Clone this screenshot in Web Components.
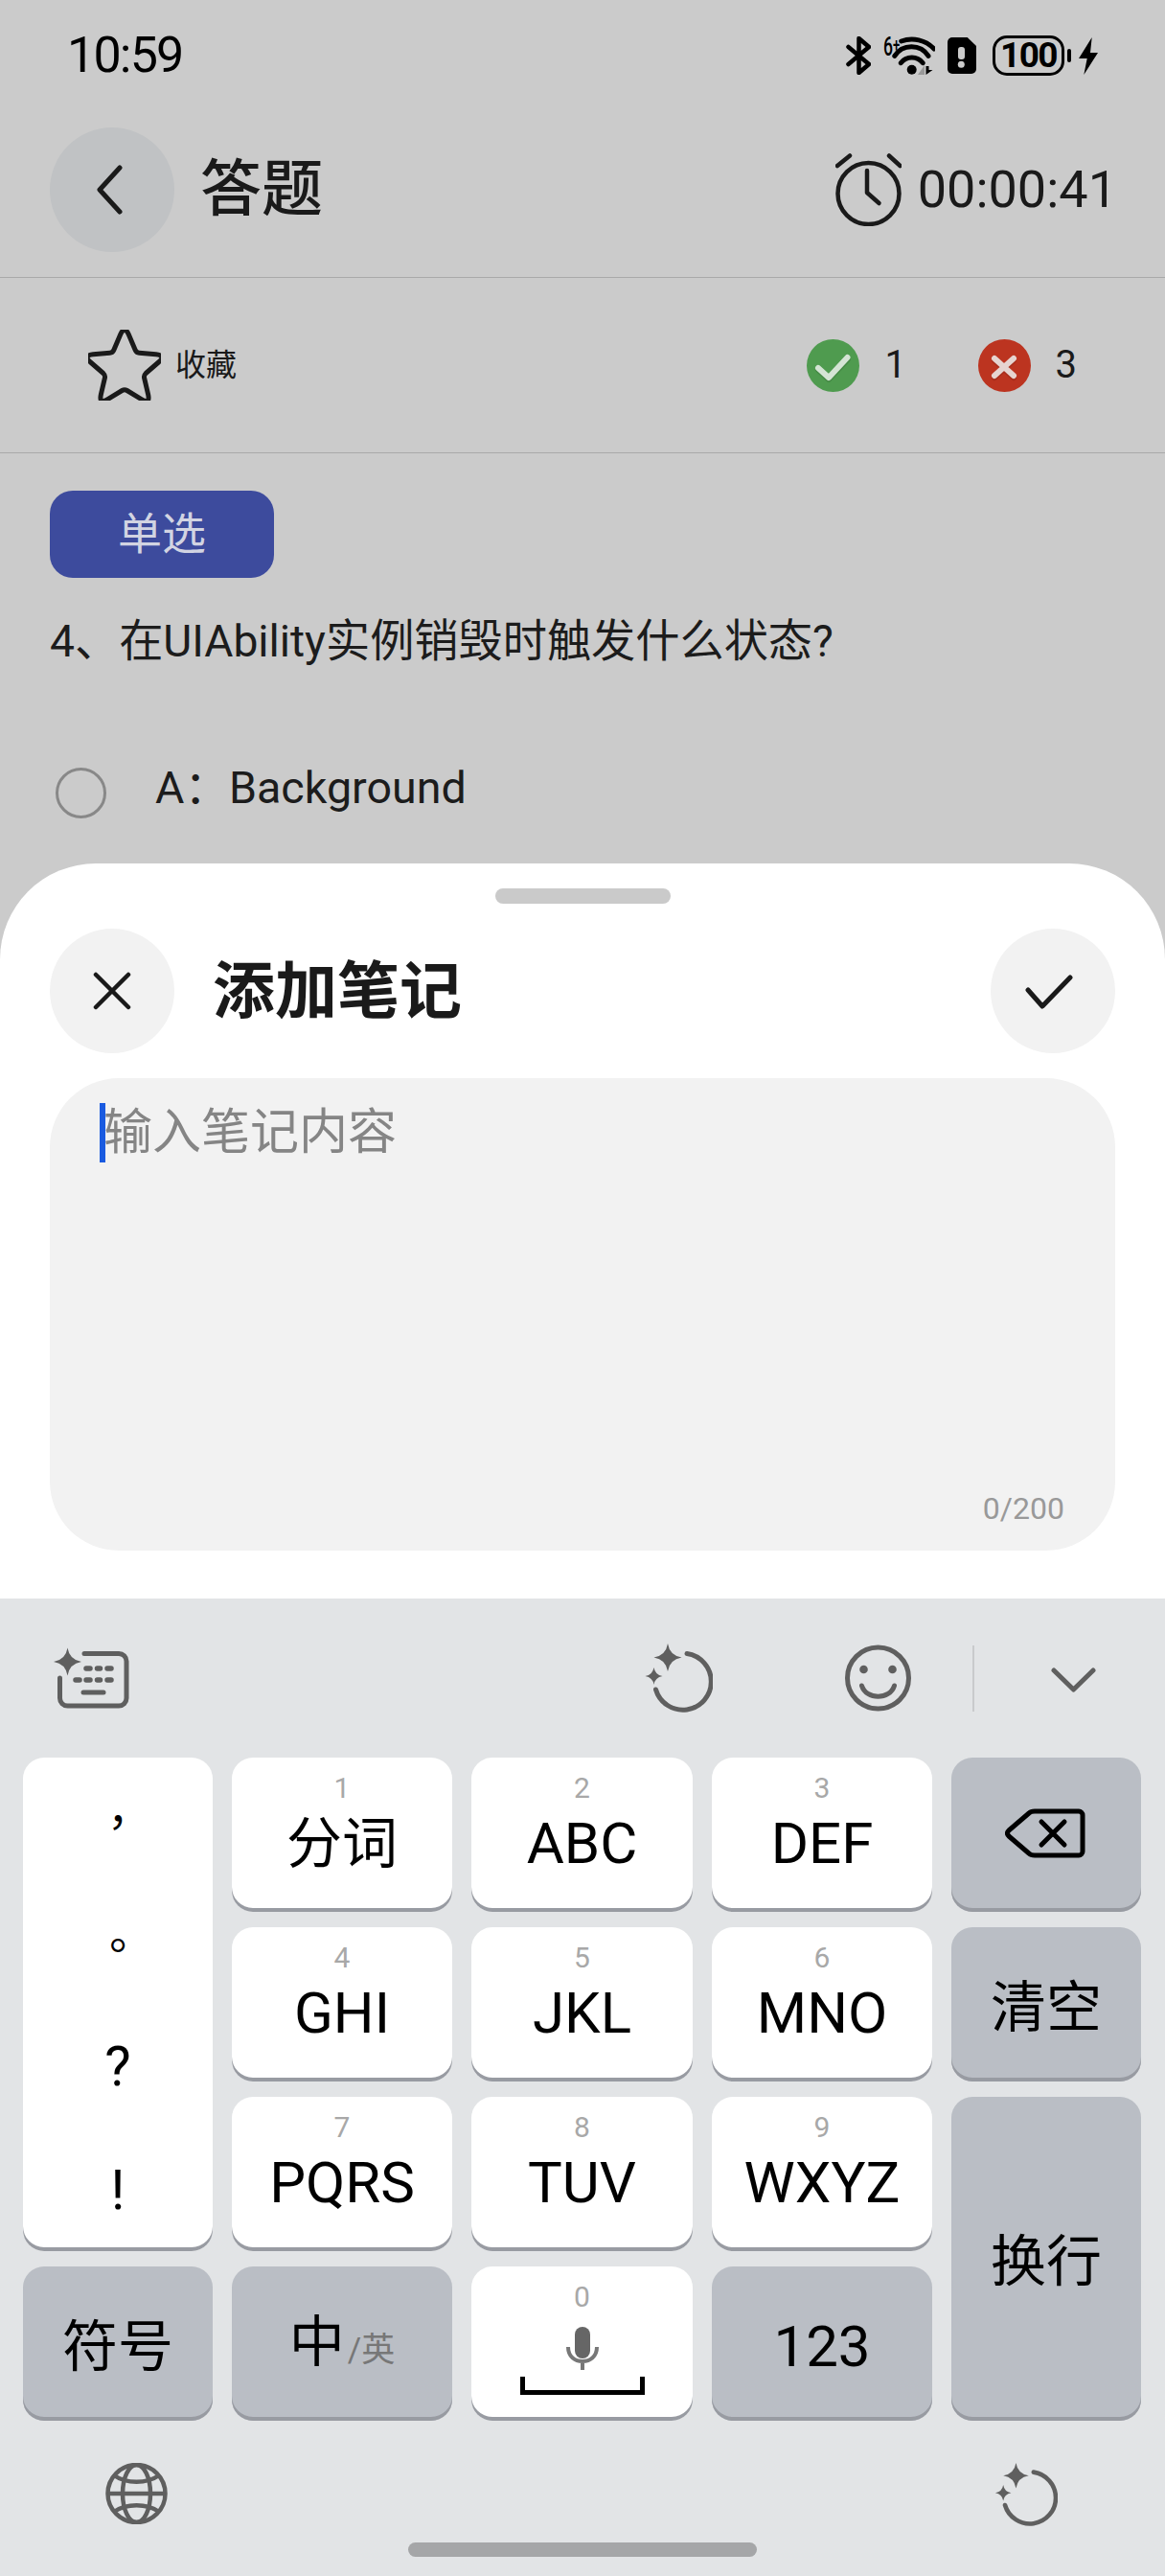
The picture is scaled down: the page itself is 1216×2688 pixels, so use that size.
<!DOCTYPE html>
<html lang="zh">
<head>
<meta charset="utf-8">
<title>答题</title>
<style>
  html, body { margin: 0; padding: 0; background: #cbcbcb; }
</style>
</head>
<body>
<answer-screen></answer-screen>
<script>
const FONT = `Roboto, "Noto Sans CJK SC", sans-serif`;

// four point sparkle used by the keyboard icons
function spark(x, y, r) {
    const k = r * 0.14;
    return `M${x} ${y - r}Q${x + k} ${y - k} ${x + r} ${y}Q${x + k} ${y + k} ${x} ${y + r}Q${x - k} ${y + k} ${x - r} ${y}Q${x - k} ${y - k} ${x} ${y - r}Z`;
}

// outline star with rounded tips
function starPath(cx, cy, R, r, dOut, dIn) {
    const pts = [];
    for (let i = 0; i < 10; i++) {
        const a = -Math.PI / 2 + i * Math.PI / 5;
        const rad = i % 2 ? r : R;
        pts.push([cx + rad * Math.cos(a), cy + rad * Math.sin(a), i % 2 ? dIn : dOut]);
    }
    const toward = (p, q, d) => {
        const len = Math.hypot(q[0] - p[0], q[1] - p[1]);
        return [p[0] + (q[0] - p[0]) * d / len, p[1] + (q[1] - p[1]) * d / len];
    };
    let path = '';
    pts.forEach((p, i) => {
        const a = toward(p, pts[(i + 9) % 10], p[2]);
        const b = toward(p, pts[(i + 1) % 10], p[2]);
        path += `${i ? 'L' : 'M'}${a[0].toFixed(1)} ${a[1].toFixed(1)}Q${p[0].toFixed(1)} ${p[1].toFixed(1)} ${b[0].toFixed(1)} ${b[1].toFixed(1)}`;
    });
    return path + 'Z';
}

const magicIcon = (w, h) => `
    <svg width="${w}" height="${h}" viewBox="0 0 71 72" fill="none">
        <path d="${spark(24, 14.5, 14.5)}${spark(9.5, 34, 9)}" fill="#5f5f5f"/>
        <path d="M44 10.5A29.5 29.5 0 1 1 11.5 48" stroke="#5f5f5f" stroke-width="5" stroke-linecap="round"/>
    </svg>`;

function define(tag, html) {
    const template = document.createElement('template');
    template.innerHTML = html;
    customElements.define(tag, class extends HTMLElement {
        constructor() {
            super();
            this.attachShadow({mode: 'open'});
            this.shadowRoot.appendChild(template.content.cloneNode(true));
        }
    });
}

define('status-bar', `
    <style>
        :host{ display:flex; align-items:center; justify-content:space-between; height:116px; padding:0 70px; color:#000; font-family:${FONT}; }
        .time{ font-size:52px; letter-spacing:-1.8px; line-height:60px; }
        .icons{ display:flex; align-items:center; }
        .net{ align-self:flex-start; width:18px; height:22px; margin:-1px -31px 0 13px; font-size:27px; font-weight:500; line-height:22px; white-space:nowrap; transform:scaleX(.65); transform-origin:left; }
        .net small{ font-size:20px; vertical-align:4px; }
        .batt{ display:flex; align-items:center; justify-content:center; box-sizing:border-box; width:75px; height:42px; border:3px solid #000; border-radius:15px; margin-left:17px; font-size:37px; font-weight:700; letter-spacing:-1.5px; line-height:36px; }
        .nub{ width:4px; height:14px; background:#000; border-radius:2px; margin:0 8px 0 3px; }
        svg{ display:block; }
    </style>
    <div class="time">10:59</div>
    <div class="icons">
        <svg width="26" height="40" viewBox="0 0 26 40" fill="none" stroke="#000" stroke-width="4.5" stroke-linejoin="round" stroke-linecap="round"><path d="M2.5 11L24 29L13.5 38V2L24 11L2.5 29"/></svg>
        <span class="net">6<small>+</small></span>
        <svg width="54" height="42" viewBox="0 0 54 42" fill="none" style="margin-left:13px">
            <g stroke="#000" stroke-width="5" stroke-linecap="round">
                <path d="M18.7 6A32 32 0 0 1 53 14"/><path d="M11.8 21.3A21 21 0 0 1 47 21.3"/><path d="M18.2 28.7A14.6 14.6 0 0 1 41.3 28.7"/>
            </g>
            <circle cx="29.7" cy="35.7" r="5" fill="#000"/>
            <path d="M43 31V41H36Z" fill="#999"/><path d="M44.5 32V41L51.5 36H47.5V32Z" fill="#000"/>
        </svg>
        <svg width="30" height="38" viewBox="0 0 30 38" style="margin-left:13px">
            <path d="M5 0H20.7L30 9V33a5 5 0 0 1-5 5H5a5 5 0 0 1-5-5V5a5 5 0 0 1 5-5Z" fill="#000"/>
            <rect x="11" y="10" width="7" height="13" rx="3" fill="#cbcbcb"/><circle cx="14.3" cy="28.3" r="3.5" fill="#cbcbcb"/>
        </svg>
        <div class="batt">100</div>
        <div class="nub"></div>
        <svg width="20" height="39" viewBox="0 0 20 39"><path d="M13.7 0L0 22H8.7L5.3 39L20 16H12Z" fill="#000"/></svg>
    </div>
`);

define('nav-bar', `
    <style>
        :host{ display:flex; align-items:center; margin-top:17px; padding:0 50px 26px 52px; border-bottom:1px solid #a9a9a9; color:#1a1a1a; font-family:${FONT}; }
        .back{ display:flex; align-items:center; justify-content:center; width:130px; height:130px; border-radius:50%; background:#c0c2c4; }
        .back svg{ position:relative; left:-3px; }
        h1{ margin:0 0 0 27px; font-size:64px; font-weight:500; line-height:80px; flex:1; }
        .time{ font-size:54px; font-weight:400; line-height:60px; margin-left:17px; }
        svg{ display:block; }
    </style>
    <div class="back"><svg width="27" height="52" viewBox="0 0 27 52" fill="none" stroke="#1a1a1a" stroke-width="5" stroke-linecap="round" stroke-linejoin="round"><path d="M24 3L3 26L24 49"/></svg></div>
    <h1>答题</h1>
    <svg width="69" height="76" viewBox="0 0 69 76" fill="none" stroke="#1a1a1a" stroke-width="4.5" stroke-linecap="round" stroke-linejoin="round">
        <circle cx="34.5" cy="42" r="32"/><path d="M33 18V41L45.5 52"/><path d="M2 13L15 2.5M56 2.5L67.5 13"/>
    </svg>
    <div class="time">00:00:41</div>
`);

define('stats-bar', `
    <style>
        :host{ display:flex; align-items:center; height:182px; padding:0 92px; border-bottom:1px solid #a9a9a9; color:#1a1a1a; font-family:${FONT}; }
        .fav{ font-size:32px; margin-left:15px; flex:1; line-height:40px; }
        .num{ font-size:40px; line-height:50px; }
        .right{ width:20px; margin-left:27px; }
        .wrong{ margin-left:26px; }
        .bad{ margin-left:77px; }
        svg{ display:block; }
    </style>
    <svg width="76" height="74" viewBox="0 0 76 74" fill="none"><path d="${starPath(38, 41, 46, 21, 11, 3)}" stroke="#1a1a1a" stroke-width="5" stroke-linejoin="round"/></svg>
    <div class="fav">收藏</div>
    <svg width="55" height="55" viewBox="0 0 55 55" fill="none">
        <circle cx="27.5" cy="27.5" r="27.5" fill="#4f9b4f"/>
        <path d="M12 31.5L23 41.5L42.5 21" stroke="#458a45" stroke-width="6.5" stroke-linecap="round" stroke-linejoin="round"/>
        <path d="M12 30L23 40L42.5 19" stroke="#d4e4d4" stroke-width="6" stroke-linecap="round" stroke-linejoin="round"/>
    </svg>
    <div class="num right">1</div>
    <svg class="bad" width="55" height="55" viewBox="0 0 55 55" fill="none">
        <circle cx="27.5" cy="27.5" r="27.5" fill="#bc3420"/>
        <path d="M17 22L37 40M37 22L17 40" stroke="#a82d1b" stroke-width="6" stroke-linecap="round"/>
        <path d="M17 20L37 38M37 20L17 38" stroke="#e6d4d0" stroke-width="6" stroke-linecap="round"/>
    </svg>
    <div class="num wrong">3</div>
`);

define('question-view', `
    <style>
        :host{ display:block; height:428px; padding:39px 0 0 52px; box-sizing:border-box; color:#1c1c1c; font-family:${FONT}; }
        .tag{ display:flex; align-items:center; justify-content:center; width:234px; height:91px; box-sizing:border-box; padding-bottom:9px; border-radius:24px; background:#3d4b9d; color:#d2d4e2; font-size:46px; }
        .stem{ margin-top:36px; font-size:46.2px; line-height:60px; }
        .opt{ display:flex; align-items:center; margin-top:102px; padding-left:6px; }
        .radio{ width:53px; height:53px; box-sizing:border-box; border:3px solid #888; border-radius:50%; }
        .txt{ margin-left:51px; font-size:46.6px; line-height:50px; position:relative; top:-6px; }
    </style>
    <div class="tag">单选</div>
    <div class="stem">4、在UIAbility实例销毁时触发什么状态?</div>
    <div class="opt"><div class="radio"></div><div class="txt">A：Background</div></div>
`);

define('note-sheet', `
    <style>
        :host{ display:block; height:767px; box-sizing:border-box; padding-top:26px; background:#fff; border-radius:100px 100px 0 0; color:#1a1a1a; font-family:${FONT}; }
        .handle{ width:183px; height:16px; margin:0 auto; border-radius:8px; background:#cacaca; }
        .head{ display:flex; align-items:center; justify-content:space-between; margin-top:26px; padding:0 52px; }
        .round{ display:flex; align-items:center; justify-content:center; width:130px; height:130px; border-radius:50%; background:#f2f2f2; }
        h2{ flex:1; margin:0 0 0 40px; font-size:65px; font-weight:700; line-height:80px; position:relative; top:1px; }
        .area{ display:flex; flex-direction:column; height:493px; box-sizing:border-box; margin:26px 52px 0; padding:26px 53px 27px 52px; border-radius:72px; background:#f2f2f2; }
        .input{ display:flex; font-size:51px; line-height:62px; color:#858585; }
        .caret{ width:6px; height:62px; background:#1a5be0; margin-right:-2px; position:relative; }
        .count{ margin-top:auto; text-align:right; font-size:32px; line-height:33px; color:#999; }
        svg{ display:block; }
    </style>
    <div class="handle"></div>
    <div class="head">
        <div class="round"><svg width="40" height="40" viewBox="0 0 40 40" fill="none" stroke="#1a1a1a" stroke-width="4.5" stroke-linecap="round"><path d="M3 3L37 37M37 3L3 37"/></svg></div>
        <h2>添加笔记</h2>
        <div class="round"><svg width="50" height="36" viewBox="0 0 50 36" fill="none" stroke="#1a1a1a" stroke-width="5" stroke-linecap="round" stroke-linejoin="round" style="position:relative;left:-4px;top:1px"><path d="M3 16L18 33L47 3"/></svg></div>
    </div>
    <div class="area">
        <div class="input"><span class="caret"></span><span>输入笔记内容</span></div>
        <div class="count">0/200</div>
    </div>
`);

define('kb-key', `
    <style>
        :host{ display:flex; flex-direction:column; align-items:center; box-sizing:border-box; padding-top:17px; border-radius:22px; background:#fff; box-shadow:inset 0 -4px 0 #989ba2; color:#000; font-size:60px; line-height:70px; font-family:${FONT}; }
        :host([dark]){ justify-content:center; padding:6px 0 0; background:#babec5; }
        .num{ font-size:30px; line-height:30px; color:#a8a8a8; }
        .label{ margin-top:8px; white-space:nowrap; display:flex; align-items:baseline; }
        :host([dark]) .num{ display:none; }
        :host([dark]) .label{ margin-top:0; }
    </style>
    <div class="num"><slot name="num"></slot></div>
    <div class="label"><slot></slot></div>
`);

define('punct-key', `
    <style>
        :host{ display:grid; grid-template-rows:repeat(4,1fr); justify-items:center; align-items:center; border-radius:22px; background:#fff; box-shadow:inset 0 -4px 0 #989ba2; color:#000; font-family:Roboto, "Noto Sans CJK TC", sans-serif; }
        span{ font-size:46px; line-height:60px; font-family:"Noto Sans CJK TC", sans-serif; }
        .big{ font-family:Roboto, sans-serif; font-size:58px; font-weight:400; }
    </style>
    <span>，</span><span>。</span><span class="big">?</span><span class="big">!</span>
`);

define('ime-keyboard', `
    <style>
        :host{ display:block; height:1020px; background:#e2e4e6; font-family:${FONT}; }
        .tools{ display:flex; align-items:center; height:166px; padding-left:56px; box-sizing:border-box; }
        .divider{ width:2px; height:69px; margin-left:64px; background:#c9cacc; }
        .grid{ display:grid; grid-template-columns:198px 230px 231px 230px 198px; grid-auto-rows:161px; gap:16px 20px; padding:0 25px 0 24px; }
        .punct{ grid-row:span 3; }
        .enter{ grid-row:span 2; }
        .mini{ display:flex; justify-content:space-between; padding:44px 112px 0 110px; height:66px; }
        .home{ width:364px; height:15px; margin:17px auto 0; border-radius:8px; background:#a5a6a8; }
        .cjk{ font-size:58px; }
        .small{ font-size:35px; color:#777; margin-left:3px; }
        .micwrap{ display:flex; flex-direction:column; align-items:center; margin-top:-3px; }
        svg{ display:block; }
    </style>
    <div class="tools">
        <svg width="80" height="64" viewBox="0 0 80 64" fill="none">
            <path d="${spark(14.5, 15, 14.5)}" fill="#5f5f5f"/>
            <g stroke="#5f5f5f" stroke-linecap="round" stroke-linejoin="round">
                <path d="M32 6.5H68a8 8 0 0 1 8 8V53a8 8 0 0 1-8 8H14.5a8 8 0 0 1-8-8V32" stroke-width="5"/>
                <path d="M34 22H38M45.5 22H48.5M56 22H60M23 34H27M34 34H38M45.5 34H48.5M56 34H60" stroke-width="5.5"/>
                <path d="M31 47H52" stroke-width="5"/>
            </g>
        </svg>
        <div style="margin-left:537px">${magicIcon(71, 72)}</div>
        <svg width="69" height="70" viewBox="0 0 69 70" fill="none" style="margin-left:138px">
            <circle cx="34.5" cy="35" r="32" stroke="#5f5f5f" stroke-width="5"/>
            <circle cx="19.5" cy="26" r="4.3" fill="#5f5f5f"/><circle cx="49.5" cy="26" r="4.3" fill="#5f5f5f"/>
            <path d="M17.5 43C22 58 47 58 51.5 43" stroke="#5f5f5f" stroke-width="5" stroke-linecap="round"/>
        </svg>
        <div class="divider"></div>
        <svg width="47" height="26" viewBox="0 0 47 26" fill="none" style="margin:4px 0 0 80px" stroke="#5f5f5f" stroke-width="5" stroke-linecap="round" stroke-linejoin="round"><path d="M3 3L23.5 23L44 3"/></svg>
    </div>
    <div class="grid">
        <punct-key class="punct"></punct-key>
        <kb-key><span slot="num">1</span><span class="cjk">分词</span></kb-key>
        <kb-key><span slot="num">2</span>ABC</kb-key>
        <kb-key><span slot="num">3</span>DEF</kb-key>
        <kb-key dark>
            <svg width="84" height="52" viewBox="0 0 84 52" fill="none" stroke="#000" stroke-width="5" stroke-linecap="round" stroke-linejoin="round" style="margin:-9px 2px 0 0">
                <path d="M31 3H77a4 4 0 0 1 4 4V45a4 4 0 0 1-4 4H31Q27 49 25 47L4 29Q1 26 4 23L25 5Q27 3 31 3Z"/>
                <path d="M38 14L62 38M62 14L38 38"/>
            </svg>
        </kb-key>
        <kb-key><span slot="num">4</span>GHI</kb-key>
        <kb-key><span slot="num">5</span>JKL</kb-key>
        <kb-key><span slot="num">6</span>MNO</kb-key>
        <kb-key dark><span class="cjk">清空</span></kb-key>
        <kb-key><span slot="num">7</span>PQRS</kb-key>
        <kb-key><span slot="num">8</span>TUV</kb-key>
        <kb-key><span slot="num">9</span>WXYZ</kb-key>
        <kb-key dark class="enter"><span class="cjk">换行</span></kb-key>
        <kb-key dark><span class="cjk">符号</span></kb-key>
        <kb-key dark><span class="cjk">中</span><span class="small">/英</span></kb-key>
        <kb-key>
            <span slot="num">0</span>
            <div class="micwrap">
                <svg width="34" height="45" viewBox="0 0 34 45" fill="none" style="margin-top:11px">
                    <rect x="9" y="0" width="16" height="33" rx="8" fill="#666"/>
                    <path d="M2 21C2 31 9 36 17 36S32 31 32 21M17 36V45" stroke="#777" stroke-width="4"/>
                </svg>
                <svg width="130" height="19" viewBox="0 0 130 19" fill="none" stroke="#000" stroke-width="5" style="margin-top:7px"><path d="M2.5 0V16.5H127.5V0"/></svg>
            </div>
        </kb-key>
        <kb-key dark>123</kb-key>
    </div>
    <div class="mini">
        <svg width="65" height="64" viewBox="0 0 65 64" fill="none" stroke="#5f5f5f" stroke-width="4.5">
            <circle cx="32.5" cy="32" r="30"/><ellipse cx="32.5" cy="32" rx="14.5" ry="30"/><path d="M2.5 32H62.5M9 13C22 22 43 22 56 13M9 51C22 42 43 42 56 51"/>
        </svg>
        ${magicIcon(66, 66)}
    </div>
    <div class="home"></div>
`);

define('answer-screen', `
    <style>
        :host{ display:block; width:1216px; height:2688px; overflow:hidden; background:#cbcbcb; }
    </style>
    <status-bar></status-bar>
    <nav-bar></nav-bar>
    <stats-bar></stats-bar>
    <question-view></question-view>
    <note-sheet></note-sheet>
    <ime-keyboard></ime-keyboard>
`);
</script>
</body>
</html>
